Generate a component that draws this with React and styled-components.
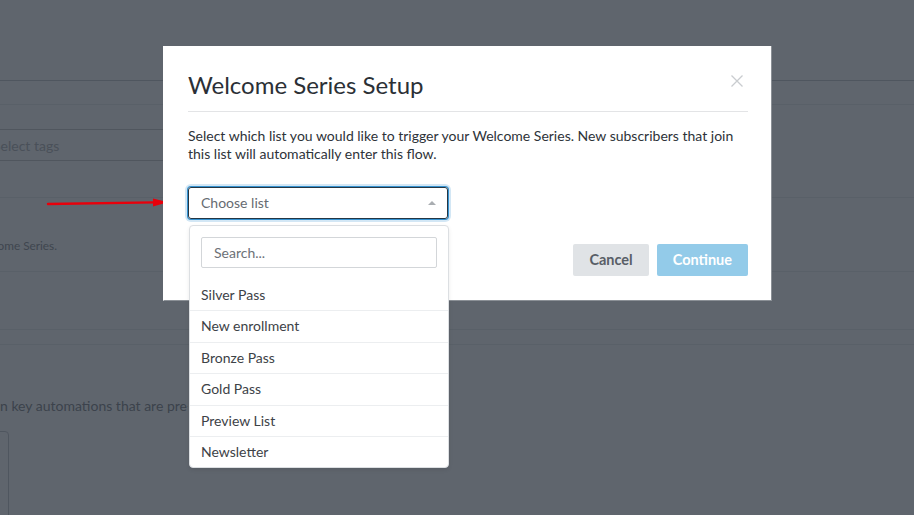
import styled, { createGlobalStyle } from "styled-components";

const GlobalStyle = createGlobalStyle`
  * { box-sizing: border-box; }
  html, body { margin: 0; padding: 0; }
  body {
    font-family: Lato, "Open Sans", "Liberation Sans", sans-serif;
    background: #fff;
    overflow: hidden;
  }
`

const Page = styled.div`
  position: relative;
  width: 100%;
  height: 100vh;
  overflow: hidden;
  background: #fff;
`
const Section = styled.div`
  height: ${p => p.$h}px;
  padding-top: ${p => p.$pt || 0}px;
  border-bottom: 1px solid ${p => (p.$strong ? "#d2d4d7" : "#eeeff1")};
`
const TagInput = styled.div`
  width: 620px;
  height: 32px;
  margin-left: -20px;
  padding: 0 12px;
  border: 1px solid #d4d4d4;
  border-radius: 3px;
  display: flex;
  align-items: center;
  font-size: 14px;
  color: #c2c4c6;
`
const Clip = styled.div`
  width: ${p => p.$w}px;
  display: flex;
  justify-content: flex-end;
  overflow: hidden;
  white-space: nowrap;
  font-size: ${p => p.$size}px;
  color: #a4a6a9;
`
const Lead = styled.p`
  width: 188px;
  margin: 52px 0 0;
  overflow: hidden;
  font-size: 14px;
  color: #9a9ca0;
  white-space: nowrap;
`
const Card = styled.div`
  width: 200px;
  height: 200px;
  margin: 17px 0 0 -191px;
  border: 1px solid #d2d4d7;
  border-radius: 4px;
`

const Overlay = styled.div`
  position: absolute;
  inset: 0;
  background: rgba(9, 18, 30, 0.65);
`

const Modal = styled.div`
  position: absolute;
  left: 163px;
  top: 46px;
  width: 609px;
  padding: 0 23px 24px 24px;
  background: #fff;
  border: 1px solid #8b9096;
  border-top: none;
  border-left-color: #fff;
`
const Header = styled.div`
  padding: 24px 0 11px;
  border-bottom: 1px solid #e3e4e6;
`
const Title = styled.h2`
  margin: 0;
  font-size: 24px;
  line-height: 30px;
  font-weight: 400;
  color: #2b3036;
`
const Close = styled.button`
  position: absolute;
  right: 28px;
  top: 29px;
  width: 12px;
  height: 12px;
  padding: 0;
  border: none;
  background: none;
  display: flex;
`
const Text = styled.p`
  margin: 15px 0 0;
  font-size: 14px;
  line-height: 18px;
  color: #2e3339;
`
const SelectWrap = styled.div`
  position: relative;
  width: 260px;
  margin-top: 24px;
`
const SelectBox = styled.div`
  height: 32px;
  padding: 0 11px 0 12px;
  border: 1px solid #243644;
  border-radius: 3px;
  box-shadow: 0 0 0 1px #3592d0, 0 0 0 3px rgba(53, 146, 208, 0.22);
  display: flex;
  align-items: center;
  justify-content: space-between;
  font-size: 14px;
  line-height: 18px;
  color: #666b71;
`
const Caret = styled.span`
  width: 0;
  height: 0;
  border-left: 4px solid transparent;
  border-right: 4px solid transparent;
  border-bottom: 4px solid #a9adb1;
`
const Menu = styled.div`
  position: absolute;
  left: 1px;
  top: 38px;
  width: 260px;
  background: #fff;
  border: 1px solid #dcdfe2;
  border-radius: 4px;
  box-shadow: 0 2px 4px rgba(0, 0, 0, 0.08);
  padding-top: 11px;
  z-index: 2;
`
const Search = styled.div`
  height: 31px;
  margin: 0 11px 12px;
  padding: 0 12px;
  border: 1px solid #d3d6d9;
  border-radius: 2px;
  display: flex;
  align-items: center;
  font-size: 14px;
  color: #6d7177;
`
const Item = styled.div`
  padding: 6px 11px;
  line-height: 18.4px;
  font-size: 14px;
  color: #3d4247;
  border-bottom: ${p => (p.$last ? "none" : "1px solid #eceef0")};
`
const Footer = styled.div`
  margin-top: 25px;
  display: flex;
  justify-content: flex-end;
  gap: 8px;
`
const Button = styled.button`
  height: 32px;
  padding: 0 ${p => p.$px}px;
  border: none;
  border-radius: 2px;
  font-family: inherit;
  font-size: 14.5px;
  font-weight: 700;
  line-height: 30px;
  background: ${p => (p.$primary ? "#93cbe9" : "#e0e3e6")};
  color: ${p => (p.$primary ? "#fff" : "#585e66")};
`

const Arrow = styled.svg`
  position: absolute;
  left: 46px;
  top: 196px;
`

const lists = ["Silver Pass", "New enrollment", "Bronze Pass", "Gold Pass", "Preview List", "Newsletter"]

const App = () => {
  return (
    <Page>
      <GlobalStyle />
      <Section $h={81} $strong />
      <Section $h={24} />
      <Section $h={93} $pt={24}>
        <TagInput>Select tags</TagInput>
      </Section>
      <Section $h={74} $pt={40}>
        <Clip $w={57} $size={11.8}>Subscribers on this list will receive the Welcome Series.</Clip>
      </Section>
      <Section $h={58} />
      <Section $h={15} />
      <Lead>n key automations that are pre-built for your account.</Lead>
      <Card />

      <Overlay />

      <Arrow width="126" height="14" viewBox="0 0 126 14">
        <path d="M2 8 L109 6.4" stroke="#e8000b" strokeWidth="2.4" strokeLinecap="round" />
        <path d="M107 2.6 L122 6.2 L107 10.6 Z" fill="#e8000b" />
      </Arrow>

      <Modal>
        <Header>
          <Title>Welcome Series Setup</Title>
        </Header>
        <Close aria-label="Close">
          <svg width="12" height="12" viewBox="0 0 12 12">
            <path d="M0.5 0.5 L11.5 11.5 M11.5 0.5 L0.5 11.5" stroke="#c9cccf" strokeWidth="1.3" />
          </svg>
        </Close>
        <Text>
          Select which list you would like to trigger your Welcome Series. New subscribers that join
          this list will automatically enter this flow.
        </Text>
        <SelectWrap>
          <SelectBox>
            Choose list
            <Caret />
          </SelectBox>
          <Menu>
            <Search>Search...</Search>
            {lists.map((name, i) => (
              <Item key={name} $last={i === lists.length - 1}>{name}</Item>
            ))}
          </Menu>
        </SelectWrap>
        <Footer>
          <Button $px={16}>Cancel</Button>
          <Button $px={16} $primary>Continue</Button>
        </Footer>
      </Modal>
    </Page>
  )
}

export default App
